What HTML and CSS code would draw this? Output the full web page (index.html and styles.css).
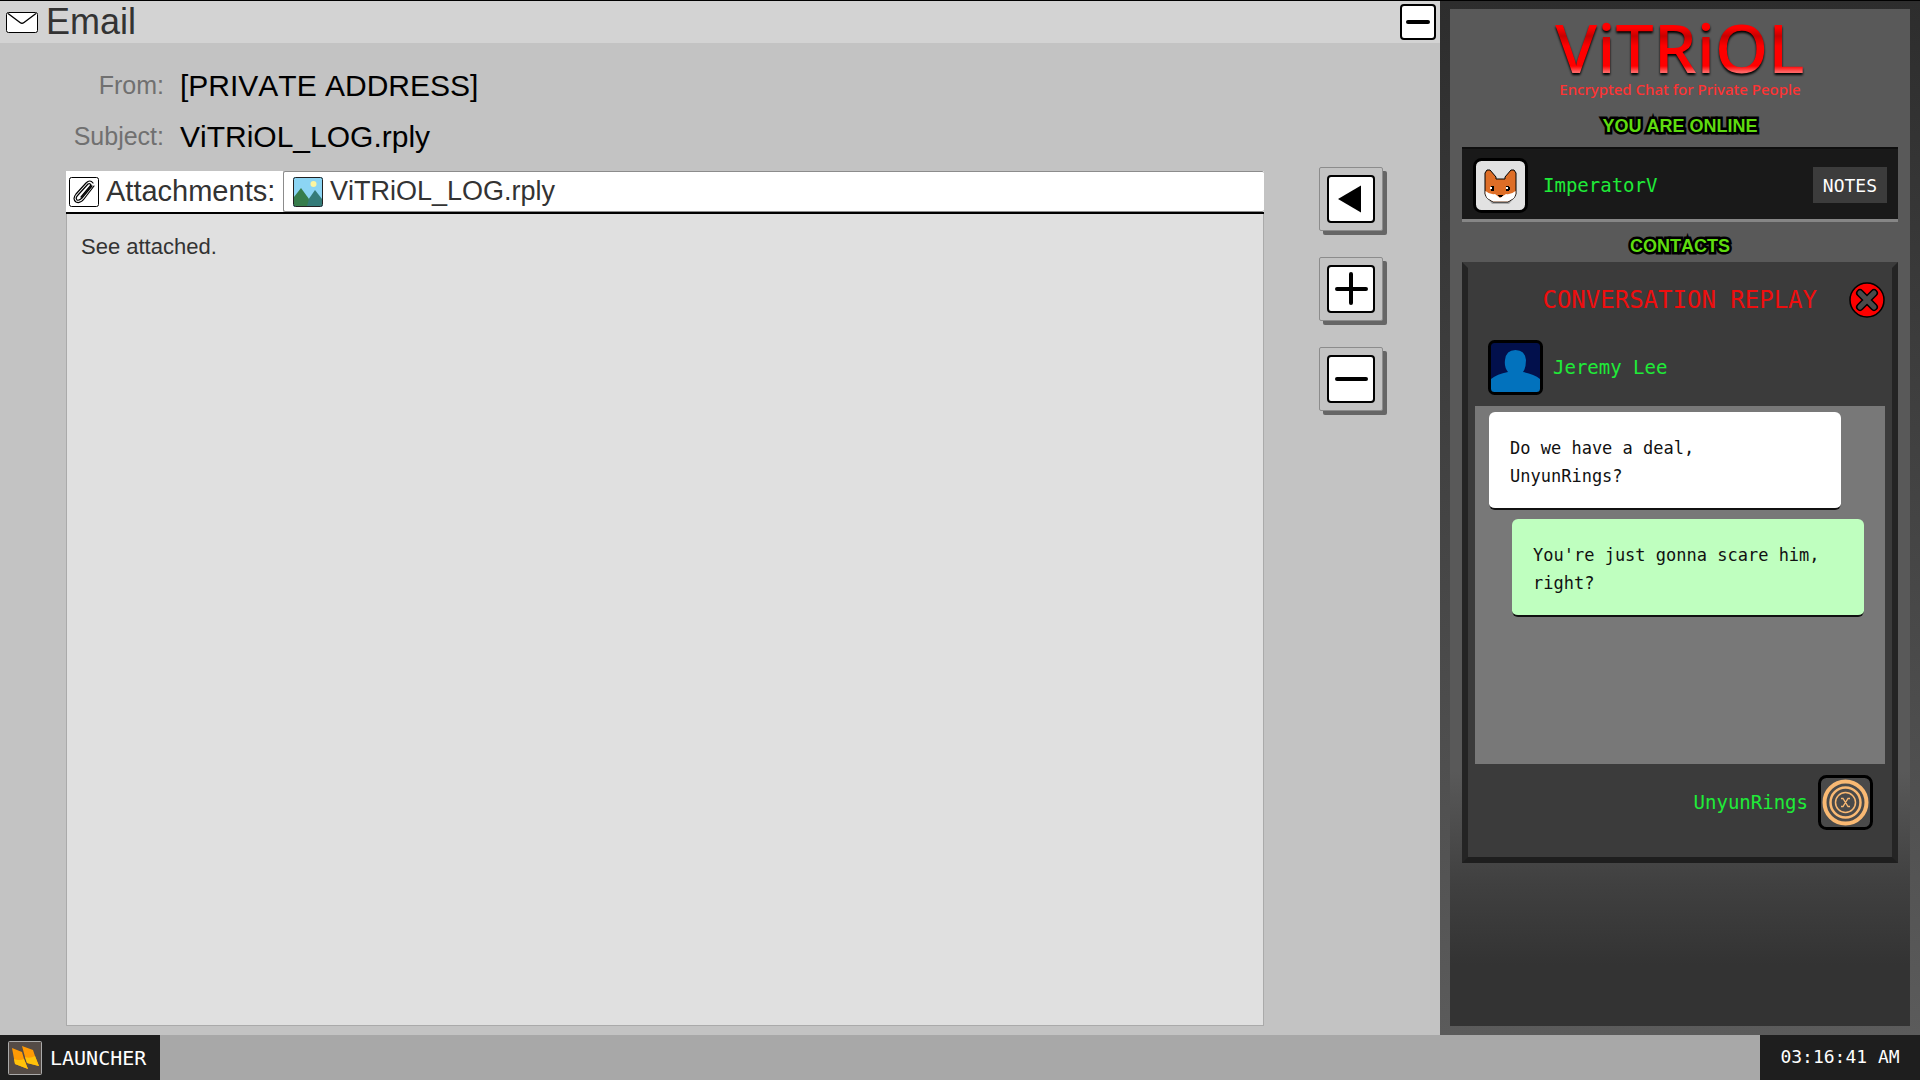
FILE: index.html
```
<!DOCTYPE html>
<html lang="en">
<head>
  <meta charset="UTF-8" />
  <meta name="viewport" content="width=device-width, initial-scale=1" />
  <title>Email</title>
  <link rel="stylesheet" href="styles.css">
</head>
<body>
  <main class="email">
    <header class="title-bar">
      <svg class="mail-icon" viewBox="0 0 32 21" width="32" height="21">
        <rect x="0.5" y="0.5" width="31" height="20" rx="2" fill="#fff" stroke="#000"/>
        <path d="M2 1.5L14 10.5Q16 12 18 10.5L30 1.5" fill="none" stroke="#000" stroke-width="1.3"/>
      </svg>
      <h1>Email</h1>
      <button class="icon-btn minimize" aria-label="Minimize">
        <svg viewBox="0 0 36 36" width="36" height="36">
          <rect x="1" y="1" width="34" height="34" rx="3" fill="#fff" stroke="#000" stroke-width="2"/>
          <path d="M8 18H28" stroke="#000" stroke-width="4" stroke-linecap="round"/>
        </svg>
      </button>
    </header>

    <dl class="meta">
      <dt>From:</dt>
      <dd>[PRIVATE ADDRESS]</dd>
      <dt>Subject:</dt>
      <dd>ViTRiOL_LOG.rply</dd>
    </dl>

    <div class="email-body">
      <section class="message">
        <div class="attachments">
          <div class="attach-label">
            <svg viewBox="0 0 30 30" width="30" height="30">
              <rect x="0.5" y="0.5" width="29" height="29" rx="2" fill="#fff" stroke="#000"/>
              <g fill="none" stroke="#000" stroke-width="1.2" stroke-linecap="round" stroke-linejoin="round">
                <path d="M25 9L15 22Q11 27 7 25Q3 22 7 17L17 6Q21 2 24 6"/>
                <path d="M23 9L13 21Q10 24 8 23Q6 21 9 18L19 7Q21 6 22 8L12 20"/>
              </g>
            </svg>
            <span>Attachments:</span>
          </div>
          <button class="file">
            <svg viewBox="0 0 30 30" width="30" height="30">
              <rect width="30" height="30" rx="2" fill="#8cd5f4"/>
              <ellipse cx="20.5" cy="7" rx="3" ry="3" fill="#fdf5a0"/>
              <path d="M13 26L22 13L29 22V29H12z" fill="#347b78"/>
              <path d="M1 20L8 11L16 22L14 29H1z" fill="#377d4c"/>
              <rect x="0.5" y="0.5" width="29" height="29" rx="2" fill="none" stroke="#222"/>
            </svg>
            <span>ViTRiOL_LOG.rply</span>
          </button>
        </div>
        <p class="text">See attached.</p>
      </section>

      <nav class="tools">
        <button class="icon-btn tool" aria-label="Back">
          <svg viewBox="0 0 48 48" width="48" height="48">
            <rect x="1" y="1" width="46" height="46" rx="3" fill="#fff" stroke="#000" stroke-width="2"/>
            <path d="M11 24L34 10.5V37.5z"/>
          </svg>
        </button>
        <button class="icon-btn tool" aria-label="Zoom in">
          <svg viewBox="0 0 48 48" width="48" height="48">
            <rect x="1" y="1" width="46" height="46" rx="3" fill="#fff" stroke="#000" stroke-width="2"/>
            <path d="M10 24H39M24 9V38" stroke="#000" stroke-width="4" stroke-linecap="round"/>
          </svg>
        </button>
        <button class="icon-btn tool" aria-label="Zoom out">
          <svg viewBox="0 0 48 48" width="48" height="48">
            <rect x="1" y="1" width="46" height="46" rx="3" fill="#fff" stroke="#000" stroke-width="2"/>
            <path d="M10 24H39" stroke="#000" stroke-width="4" stroke-linecap="round"/>
          </svg>
        </button>
      </nav>
    </div>
  </main>

  <aside class="chat-app">
    <div class="chat-inner">
      <h2 class="logo">ViTRiOL</h2>
      <p class="tagline">Encrypted Chat for Private People</p>

      <h3 class="label">YOU ARE ONLINE</h3>
      <div class="me">
        <svg class="avatar" viewBox="0 0 55 55" width="55" height="55">
          <rect x="1.5" y="1.5" width="52" height="52" rx="7" fill="#e2e2e2" stroke="#000" stroke-width="3"/>
          <path d="M12 38V16L15 12H17L23 20V21H32V20L38 12H40L43 15V38L36 46H19z" fill="#aaa"/>
          <path d="M12 36V15L14 12H17L23 19V21H32V19L38 12H41L43 15V36L41 40L35 44H20L14 40z" fill="#de6e27" stroke="#000"/>
          <path d="M12.5 33Q17 37 22 36L27 40L33 36Q38 37 42.5 33V36L41 40L35 43.5H20L14 40L12.5 36z" fill="#fff"/>
          <path d="M18 28H21V33H18V31H17V29H18zM33 28H36V29H37V32H36V33H33z"/>
          <path d="M17 29H19V31H17zM33 29H35V31H33z" fill="#fff"/>
          <path d="M25 37H30V38H29V39H26V38H25z"/>
        </svg>
        <span class="name">ImperatorV</span>
        <button class="notes">NOTES</button>
      </div>

      <h3 class="label">CONTACTS</h3>
      <section class="replay">
        <div class="replay-head">
          <h4>CONVERSATION REPLAY</h4>
          <button class="icon-btn close" aria-label="Close">
            <svg viewBox="0 0 36 36" width="36" height="36">
              <circle cx="18" cy="18" r="17" fill="#fe0000" stroke="#000" stroke-width="1.5"/>
              <path d="M11 11L25 25M25 11L11 25" stroke="#000" stroke-width="8" stroke-linecap="round"/>
              <path d="M11 11L25 25M25 11L11 25" stroke="#4a4a4a" stroke-width="5" stroke-linecap="round"/>
            </svg>
          </button>
        </div>
        <div class="contact">
          <svg class="avatar" viewBox="0 0 55 55" width="55" height="55">
            <rect x="1.5" y="1.5" width="52" height="52" rx="5" fill="#02104c"/>
            <path d="M3 39Q9 34 20 32Q16 27 17 20Q18 10 27.5 10Q37 10 38 20Q38 28 35 32Q46 34 52 39V52H3z" fill="#0272bd"/>
            <rect x="1.5" y="1.5" width="52" height="52" rx="5" fill="none" stroke="#000" stroke-width="3"/>
          </svg>
          <span class="name">Jeremy Lee</span>
        </div>
        <div class="messages">
          <p class="bubble">Do we have a deal,<br>UnyunRings?</p>
          <p class="bubble sent">You're just gonna scare him,<br>right?</p>
        </div>
        <div class="contact contact-right">
          <span class="name">UnyunRings</span>
          <svg class="avatar" viewBox="0 0 55 55" width="55" height="55">
            <rect x="1.5" y="1.5" width="52" height="52" rx="7" fill="#4a4a4a" stroke="#000" stroke-width="3"/>
            <g fill="none" stroke="#f9b973">
              <circle cx="27.5" cy="27.5" r="21" stroke-width="4"/>
              <circle cx="27.5" cy="27.5" r="15" stroke-width="2.5"/>
              <circle cx="27.5" cy="27.5" r="10" stroke-width="1.5"/>
              <path d="M23 23.5H25L30 31.5H32M32 23.5H30L25 31.5H23" stroke-width="1.3"/>
            </g>
          </svg>
        </div>
      </section>
    </div>
  </aside>

  <footer class="taskbar">
    <button class="launcher">
      <svg viewBox="0 0 34 34" width="34" height="34">
        <rect x="0.5" y="0.5" width="33" height="33" rx="1" fill="#544b46" stroke="#aaa"/>
        <path d="M4 7L14 11L16 18L20 28L7 23z" fill="#ff9a05"/>
        <path d="M6 18Q11 20 16 18L20 28L7 23z" fill="#ffc20a"/>
        <path d="M14 5L25 9L27 15L31 25L19 22L17 16z" fill="#ff9a05"/>
        <path d="M17 16Q22 18 27 15L31 25L19 22z" fill="#ffc20a"/>
      </svg>
      <span>LAUNCHER</span>
    </button>
    <time class="clock">03:16:41 AM</time>
  </footer>
</body>
</html>
```
FILE: styles.css
```
* {
  box-sizing: border-box;
}
body {
  margin: 0;
  min-height: 100vh;
  display: grid;
  grid-template-columns: 3fr 1fr;
  grid-template-rows: 1fr 45px;
  border-top: 1px solid #000;
  background: #c3c3c3;
  color: #333;
  font-family: "Liberation Sans", Arial, sans-serif;
  font-kerning: none;
}
h1, h2, h3, h4, p, dl, dd {
  margin: 0;
  font-weight: normal;
}
button {
  margin: 0;
  padding: 0;
  border: none;
  background: none;
  font: inherit;
  font-kerning: none;
  color: inherit;
  cursor: pointer;
}
svg {
  display: block;
  flex: none;
}

/* email window */
.email {
  display: flex;
  flex-direction: column;
  background: #c3c3c3;
}
.title-bar {
  display: flex;
  align-items: center;
  height: 42px;
  padding: 0 4px 0 6px;
  background: #d3d3d3;
}
.title-bar h1 {
  margin-left: 8px;
  font-size: 36px;
  line-height: 42px;
}
.minimize {
  margin-left: auto;
}
.meta {
  display: grid;
  grid-template-columns: 164px 1fr;
  column-gap: 16px;
  padding: 17px 0 5px;
  line-height: 51px;
}
.meta dt {
  text-align: right;
  font-size: 25px;
  color: #707070;
}
.meta dd {
  font-size: 30px;
  color: #000;
}
.email-body {
  flex: 1;
  display: grid;
  grid-template-columns: 1fr 176px;
  padding: 0 0 9px 66px;
}
.message {
  display: flex;
  flex-direction: column;
  padding-top: 4px;
}
.attachments {
  display: flex;
  height: 43px;
  border-bottom: 2px solid #000;
  background: #fff;
}
.attach-label {
  display: flex;
  align-items: center;
  gap: 7px;
  width: 217px;
  padding-left: 3px;
  font-size: 29px;
}
.file {
  flex: 1;
  display: flex;
  align-items: center;
  gap: 7px;
  padding-left: 9px;
  border: 1px solid #8c8c8c;
  border-right: none;
  border-radius: 2px;
  font-size: 27px;
}
.text {
  flex: 1;
  padding: 20px 14px;
  border: 1px solid #aaa;
  border-top: none;
  background: #e0e0e0;
  font-size: 22px;
  line-height: 26px;
}
.tools {
  display: flex;
  flex-direction: column;
  align-items: center;
  gap: 26px;
  padding-right: 2px;
}
.tool {
  width: 64px;
  height: 64px;
  padding: 7px;
  border: 1px solid #8c8c8c;
  border-radius: 2px;
  background: #c3c3c3;
  box-shadow: 4px 4px 0 #666;
}

/* chat sidebar */
.chat-app {
  display: flex;
  padding: 8px 10px 9px;
  background: linear-gradient(#2d2d2d, #5b5b5b);
}
.chat-inner {
  flex: 1;
  padding: 0 12px;
  background: linear-gradient(#595959 75%, #404040 86%, #333 94%);
  text-align: center;
}
.logo {
  height: 70px;
  font-family: "Noto Sans", sans-serif;
  font-size: 68px;
  font-weight: 500;
  line-height: 76px;
  background: linear-gradient(#f00 19px, #c80000 27px, #f00 37px, #f00 57px, #f66 63px);
  -webkit-background-clip: text;
  background-clip: text;
  color: transparent;
  filter: drop-shadow(0 2px 1px #000);
}
.tagline {
  font-family: "Noto Sans", sans-serif;
  font-size: 15px;
  font-weight: 500;
  line-height: 20px;
  color: #f33;
}
.label {
  height: 40px;
  font-size: 18px;
  font-weight: bold;
  line-height: 48px;
  color: #5fdc0f;
  -webkit-text-stroke: 5px #000;
  paint-order: stroke fill;
}
.tagline + .label {
  line-height: 54px;
}
.name {
  font-family: "DejaVu Sans Mono", monospace;
  font-size: 19px;
  color: #1feb38;
}
.me {
  display: flex;
  align-items: center;
  gap: 15px;
  height: 75px;
  margin-top: 8px;
  padding: 2px 11px 0;
  border-top: 2px solid #0e0e0e;
  border-bottom: 3px solid #868686;
  background: #191919;
}
.notes {
  height: 36px;
  margin-left: auto;
  padding: 0 10px;
  background: #3c3c3c;
  color: #fff;
  font-family: "DejaVu Sans Mono", monospace;
  font-size: 18px;
}
.replay {
  height: 601px;
  padding: 0 7px;
  border: 6px solid #242424;
  border-top-color: #3b3b3b;
  border-bottom-color: #1e1e1e;
  background: #3b3b3b;
}
.replay-head {
  display: flex;
  align-items: center;
  justify-content: flex-end;
  gap: 32px;
  height: 64px;
}
.replay-head h4 {
  font-family: "DejaVu Sans Mono", monospace;
  font-size: 24px;
  color: #ee0e0e;
}
.contact {
  display: flex;
  align-items: center;
  gap: 10px;
  height: 74px;
  padding: 0 12px 4px 13px;
}
.contact-right {
  justify-content: flex-end;
  padding: 2px 12px 0;
}
.messages {
  display: flex;
  flex-direction: column;
  gap: 9px;
  height: 358px;
  padding: 6px 21px 6px 14px;
  background: #787878;
}
.bubble {
  width: 352px;
  padding: 22px 21px 18px;
  border-bottom: 2px solid #111;
  border-radius: 6px;
  background: #fff;
  color: #111;
  font-family: "DejaVu Sans Mono", monospace;
  font-size: 17px;
  line-height: 28px;
  text-align: left;
}
.sent {
  align-self: flex-end;
  background: #bfffbf;
}

/* taskbar */
.taskbar {
  grid-column: 1 / -1;
  display: flex;
  justify-content: space-between;
  background: #a8a8a8;
  color: #fff;
  font-family: "DejaVu Sans Mono", monospace;
}
.launcher {
  display: flex;
  align-items: center;
  gap: 8px;
  width: 160px;
  padding-left: 8px;
  background: #1e1e1e;
  font-size: 20px;
}
.clock {
  width: 160px;
  background: #1e1e1e;
  font-size: 18px;
  line-height: 43px;
  text-align: center;
}
```
